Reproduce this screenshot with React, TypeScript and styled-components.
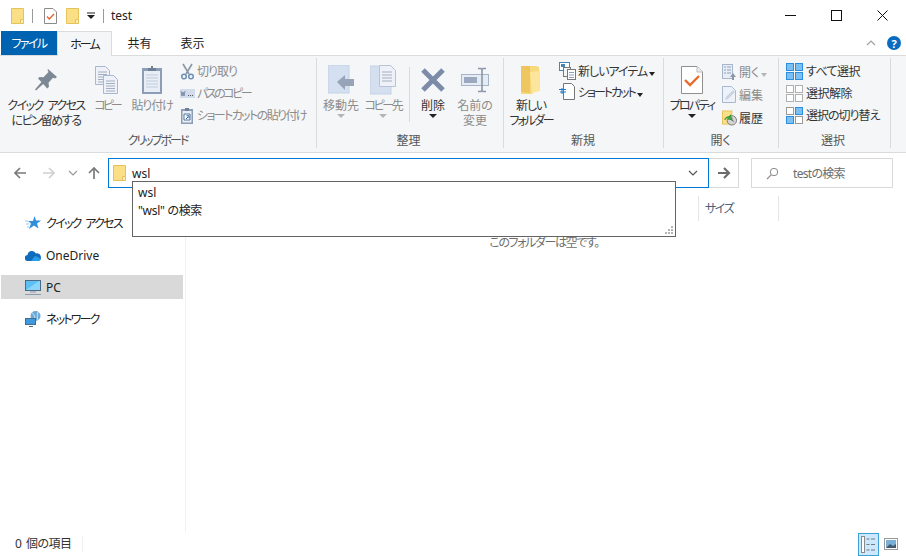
import React from "react";
import styled, { createGlobalStyle } from "styled-components";

const Global = createGlobalStyle`
  html, body { margin: 0; padding: 0; background: #fff; }
  * { box-sizing: border-box; }
`;
const Page = styled.div`
  position: relative; width: 906px; height: 556px; overflow: hidden; background: #fff;
  display: flex; flex-direction: column;
  font-family: "Noto Sans", "Noto Sans CJK JP", sans-serif; font-size: 12px; color: #222;
  font-feature-settings: "palt";
`;
const Tight = styled.span<{ $ls: number; $ws?: number }>`letter-spacing: ${p => p.$ls}px; word-spacing: ${p => p.$ws ?? 0}px;`;
const TitleBar = styled.div`height: 31px; display: flex; align-items: center; padding-left: 11px; flex: none;`;
const QatSep = styled.div<{ $ml: number; $mr: number }>`width: 1px; height: 14px; background: #9a9a9a; margin: 0 ${p => p.$mr}px 0 ${p => p.$ml}px;`;
const TitleText = styled.span`font-size: 12px; color: #222; line-height: 1;`;
const WinControls = styled.div`margin-left: auto; display: flex; align-items: center; height: 100%; padding-right: 1px;`;
const WinButton = styled.div`width: 46px; height: 100%; display: flex; align-items: center; justify-content: center;`;
const TabRow = styled.div`height: 24px; display: flex; align-items: stretch; padding-left: 1px; flex: none; position: relative;`;
const Tab = styled.div<{ $w: number; $kind?: "file" | "active" }>`
  width: ${p => p.$w}px; display: flex; align-items: center; justify-content: center; font-size: 12px;
  ${p => p.$kind === "file" ? "background:#0063b1;color:#fff;" : ""}
  ${p => p.$kind === "active" ? "background:#f5f6f7;border:1px solid #dadbdc;border-bottom:none;height:25px;position:relative;z-index:1;" : ""}
`;
const TabTools = styled.div`margin-left: auto; display: flex; align-items: center; gap: 11px; padding-right: 5px;`;
const HelpDot = styled.div`
  width: 14px; height: 14px; border-radius: 50%; background: #0a6cc0; color: #fff; font-size: 11px; font-weight: 700;
  display: flex; align-items: center; justify-content: center; line-height: 1;
`;
const Ribbon = styled.div`
  height: 98px; flex: none; background: #f5f6f7; border-top: 1px solid #dadbdc; border-bottom: 1px solid #dadbdc;
  display: flex; padding: 2px 0 0 2px;
`;
const Group = styled.div<{ $w: number; $pl?: number }>`
  width: ${p => p.$w}px; height: 90px; border-right: 1px solid #dadbdc; display: flex; flex-direction: column;
  padding-left: ${p => p.$pl ?? 0}px;
`;
const GroupBody = styled.div`flex: 1; display: flex; align-items: flex-start; min-height: 0;`;
const GroupLabel = styled.div<{ $pr?: number }>`
  height: 15px; line-height: 15px; text-align: center; color: #555; font-size: 12px; margin-left: -1px;
  padding-right: ${p => p.$pr ?? 0}px;
`;
const BigButton = styled.div<{ $w: number; $off?: boolean }>`
  width: ${p => p.$w}px; flex: none; display: flex; flex-direction: column; align-items: center;
  color: ${p => p.$off ? "#8c8c8c" : "#333"};
`;
const BigIcon = styled.div`height: 40px; display: flex; align-items: center; justify-content: center; padding-top: 3px;`;
const BigLabel = styled.div`
  line-height: 15px; text-align: center; white-space: nowrap; font-size: 12px; padding-top: 1px;
  font-family: "Liberation Sans", "Noto Sans CJK JP", sans-serif;
`;
const LabelLine = styled(Tight)`display: block;`;
const Caret = styled.div<{ $off?: boolean }>`
  width: 0; height: 0; border-left: 4px solid transparent; border-right: 4px solid transparent;
  border-top: 4px solid ${p => p.$off ? "#b5b5b5" : "#222"};
`;
const RibbonRule = styled.div`width: 1px; height: 55px; background: #dadbdc; margin: 9px 2px 0 5px; flex: none;`;
const SmallColumn = styled.div<{ $pl: number }>`padding: 2px 0 0 ${p => p.$pl}px; display: flex; flex-direction: column;`;
const SmallRow = styled.div<{ $h: number; $slot: number; $gap: number; $off?: boolean }>`
  height: ${p => p.$h}px; display: flex; align-items: center; white-space: nowrap; gap: ${p => p.$gap}px;
  color: ${p => p.$off ? "#8c8c8c" : "#333"}; font-size: 12px;
  & > svg { width: ${p => p.$slot}px; flex: none; }
`;
const InlineCaret = styled.span<{ $off?: boolean }>`
  display: inline-block; width: 0; height: 0; margin-left: 2px; border-left: 3.5px solid transparent; border-right: 3.5px solid transparent;
  border-top: 4px solid ${p => p.$off ? "#b5b5b5" : "#222"};
`;
const AddressRow = styled.div`height: 38px; flex: none; display: flex; padding: 5px 0 0 0; align-items: flex-start;`;
const NavCluster = styled.div`width: 108px; height: 30px; flex: none; display: flex; align-items: center; padding-left: 13px;`;
const AddressBox = styled.div`
  width: 601px; height: 30px; flex: none; border: 1px solid #0078d7; display: flex; align-items: center; padding: 0 10px 0 4px; gap: 6px; font-size: 12px;
  justify-content: flex-start;
`;
const AddressText = styled.span`flex: 1;`;
const GoButton = styled.div`
  width: 30px; height: 30px; flex: none; border: 1px solid #d9d9d9; border-left: none; display: flex; align-items: center; justify-content: center;
`;
const SearchBox = styled.div`
  width: 142px; height: 30px; flex: none; margin-left: 12px; border: 1px solid #d9d9d9; display: flex; align-items: center; padding-left: 14px; gap: 14px; color: #6d6d6d; font-size: 12px;
`;
const Main = styled.div`flex: 1; min-height: 0; display: flex;`;
const Sidebar = styled.div`width: 186px; flex: none; border-right: 1px solid #f0f0f0; padding: 20px 2px 0 1px; display: flex; flex-direction: column; gap: 8px;`;
const NavItem = styled.div<{ $sel?: boolean }>`
  height: 24px; display: flex; align-items: center; padding-left: 24px; gap: 5px; color: #222; font-size: 12px;
  background: ${p => p.$sel ? "#d9d9d9" : "transparent"};
`;
const Content = styled.div`flex: 1; position: relative;`;
const ColumnHeader = styled.div`height: 25px; margin-top: 5px; margin-left: 512px; display: flex;`;
const ColumnCell = styled.div`
  width: 81px; height: 25px; border-left: 1px solid #e5e5e5; border-right: 1px solid #e5e5e5;
  padding-left: 6px; display: flex; align-items: center; color: #4c607a; font-size: 12px; padding-bottom: 2px;
`;
const EmptyNote = styled.div`margin-top: 14px; text-align: center; color: #6d6d6d; font-size: 12px; padding-right: 4px; line-height: 16px;`;
const StatusBar = styled.div`height: 24px; flex: none; display: flex; align-items: center; padding-left: 15px; font-size: 12px; color: #333; position: relative;`;
const StatusText = styled.span`padding-bottom: 2px; letter-spacing: -0.5px; word-spacing: 2px;`;
const StatusSep = styled.div`width: 1px; height: 16px; background: #efefef; margin-left: 10px;`;
const ViewButtons = styled.div`margin-left: auto; display: flex; align-items: center; padding-right: 8px; gap: 5px; height: 100%;`;
const ViewActive = styled.div`width: 21px; height: 23px; background: #cce8ff; border: 1px solid #3fa0d8; display: flex; align-items: center; justify-content: center;`;
const Suggest = styled.div`
  position: absolute; left: 132px; top: 181px; width: 544px; height: 56px; background: #fff; border: 1px solid #646464; z-index: 5;
  padding: 2px 0 0 5px; font-size: 12px; color: #222; line-height: 18px;
`;
const SuggestGrip = styled.svg`position: absolute; right: 2px; bottom: 2px;`;

const Folder = ({ w = 13, h = 16 }: { w?: number; h?: number }) => (
  <svg width={w} height={h} viewBox="0 0 13 16">
    <path d="M.5.5h12v15H.5z" fill="#fbdf87" stroke="#e6c25b" />
    <path d="M9.5 11.5h3v4h-3z" fill="#fdeeb9" stroke="#e6c25b" />
  </svg>
);
const CheckDoc = () => (
  <svg width="13" height="16" viewBox="0 0 13 16">
    <path d="M.5.5h8.5l3.5 3.5v11.5H.5z" fill="#fff" stroke="#8a8a8a" />
    <path d="M3 8.5l2.3 2.5L10 6" fill="none" stroke="#e8622a" strokeWidth="1.4" />
  </svg>
);
const Pin = () => (
  <svg width="24" height="24" viewBox="0 0 24 24">
    <path d="M14 1l9 8-2 1.5-2-.7-4.500 5 .5 4-1.800 1.700-4-4.500L2 22.500 1 21.500l6.500-7.500-3.500-3.500L5.500 9l4 .2L14.500 4 13.500 2z" fill="#7c8895" />
  </svg>
);
const DocLines = ({ x, y }: { x: number; y: number }) => (
  <g transform={`translate(${x} ${y})`}>
    <path d="M.5.5h10l4 4v14H.5z" fill="#eef2f8" stroke="#a9b8d0" />
    <path d="M3 6h9M3 8.500h9M3 11h9M3 13.500h9M3 16h9" stroke="#a3aec0" />
  </g>
);
const CopyIcon = () => (
  <svg width="26" height="30" viewBox="0 0 26 30">
    <DocLines x={1} y={1} />
    <DocLines x={9} y={10} />
  </svg>
);
const PasteIcon = () => (
  <svg width="22" height="30" viewBox="0 0 22 30">
    <rect x="1" y="3" width="20" height="26" fill="#8d9db5" />
    <rect x="3" y="6" width="16" height="21" fill="#e9eef6" />
    <path d="M5 10h12M5 13h12M5 16h12M5 19h12M5 22h12" stroke="#c0cbdc" />
    <path d="M7 6V3h3V1h2v2h3v3z" fill="#6f7f96" />
  </svg>
);
const Scissors = () => (
  <svg width="15" height="17" viewBox="0 0 15 17">
    <path d="M3 1l6 10M12 1L6 11" stroke="#8a97a8" strokeWidth="1.6" fill="none" />
    <circle cx="4" cy="13.500" r="2.300" fill="none" stroke="#6f8fb5" strokeWidth="1.500" />
    <circle cx="11" cy="13.500" r="2.300" fill="none" stroke="#6f8fb5" strokeWidth="1.500" />
  </svg>
);
const PathIcon = () => (
  <svg width="15" height="9" viewBox="0 0 15 9">
    <rect width="15" height="9" fill="#d3dcea" />
    <path d="M1 2l1 5 1-4 1 4 1-5" stroke="#5c6f8c" strokeWidth=".7" fill="none" />
    <path d="M8 6.500h1M10 6.500h1M12 6.500h1" stroke="#4d5a6e" />
  </svg>
);
const ShortcutPaste = () => (
  <svg width="15" height="17" viewBox="0 0 15 17">
    <rect x="1" y="2" width="12" height="15" fill="#8d9db5" />
    <rect x="2.500" y="4" width="9" height="11.500" fill="#e9eef6" />
    <path d="M5 1h4v3H5z" fill="#6f7f96" />
    <path d="M4 7h6v6H4z" fill="#fff" stroke="#55779c" />
    <path d="M6 12l2-2M6.500 8.800H9v2.500" stroke="#2b65a8" fill="none" />
  </svg>
);
const MoveIcon = () => (
  <svg width="27" height="30" viewBox="0 0 27 30">
    <rect x="0" y="0" width="21" height="28" fill="#d4dfef" stroke="#c4d2e6" />
    <path d="M9 17l8-7v4h9v7h-9v4z" fill="#97a4b8" />
  </svg>
);
const CopyToIcon = () => (
  <svg width="27" height="30" viewBox="0 0 27 30">
    <rect x="0" y="1" width="21" height="28" fill="#d4dfef" stroke="#c4d2e6" />
    <path d="M9.500.5h11l5 5v16h-16z" fill="#eef2f8" stroke="#b8c4d6" />
    <path d="M12 7h10M12 10h10M12 13h10M12 16h10" stroke="#a3aec0" />
  </svg>
);
const DeleteIcon = () => (
  <svg width="26" height="26" viewBox="0 0 26 26">
    <path d="M3 3l20 20M23 3L3 23" stroke="#7c8ca8" strokeWidth="5" />
  </svg>
);
const RenameIcon = () => (
  <svg width="28" height="26" viewBox="0 0 28 26">
    <rect x=".5" y="7.500" width="27" height="11" fill="#e6ecf5" stroke="#a6b4c8" />
    <rect x="3" y="10" width="13" height="6" fill="#9aa9c0" />
    <path d="M17 1.500h3l1 1 1-1h3M21 2.500v21M17 24.500h3l1-1 1 1h3" fill="none" stroke="#8a97a8" strokeWidth="1.600" />
  </svg>
);
const TallFolder = () => (
  <svg width="20" height="28" viewBox="0 0 20 28">
    <path d="M0 0h15l3 1v19L11 28H0z" fill="#f7d97b" />
    <path d="M9 6l10-1v20l-8 2z" fill="#fde69c" />
    <path d="M0 0h9v6H0z" fill="#eec458" />
    <path d="M0 0v26l9 1V6z" fill="#efc760" />
  </svg>
);
const NewItem = () => (
  <svg width="17" height="18" viewBox="0 0 17 18">
    <rect x=".5" y=".5" width="10" height="8" fill="#fff" stroke="#4a84b5" />
    <rect x="2" y="2" width="4" height="3" fill="#4a84b5" />
    <rect x="4.500" y="5.500" width="7" height="9" fill="#f4f5f7" stroke="#777" />
    <rect x="8.500" y="7.500" width="8" height="10" fill="#fff" stroke="#777" />
    <path d="M10 10.500h5M10 13h5M10 15.500h5" stroke="#8aa2c0" />
  </svg>
);
const ShortcutIcon = () => (
  <svg width="17" height="17" viewBox="0 0 17 17">
    <path d="M4.500.5h8l3 3v13h-11z" fill="#fff" stroke="#777" />
    <path d="M0 6.500h7M1 9h6M3 5v6" stroke="#1f78c8" strokeWidth="1" fill="none" />
  </svg>
);
const PropsIcon = () => (
  <svg width="22" height="28" viewBox="0 0 22 28">
    <path d="M.5.5h15.500l5.500 5.500v21.500H.5z" fill="#fff" stroke="#8f8f8f" />
    <path d="M16 .5v5.500h5.500" fill="#eee" stroke="#bbb" />
    <path d="M4 14l5 5 9-9" fill="none" stroke="#ea6a2a" strokeWidth="2.400" />
  </svg>
);
const OpenIcon = () => (
  <svg width="15" height="16" viewBox="0 0 15 16">
    <rect x=".5" y=".5" width="10" height="14" fill="#e9eef6" stroke="#a8b6ca" />
    <path d="M2 3h2M2 6h2M2 9h2M5 3h4M5 6h4M5 9h4" stroke="#8ea0b8" />
    <path d="M8 13l3-4 3 4h-2v3h-2v-3z" fill="#8a97a8" />
  </svg>
);
const EditIcon = () => (
  <svg width="15" height="17" viewBox="0 0 15 17">
    <path d="M.5.5h9l4 4v12H.5z" fill="#eef2f8" stroke="#a9b8d0" />
    <path d="M3 14l1-3 7-7 2 2-7 7z" fill="#c9d3e2" />
  </svg>
);
const HistoryIcon = () => (
  <svg width="16" height="16" viewBox="0 0 16 16">
    <rect x=".5" y=".5" width="10" height="14" fill="#fbdf87" stroke="#e6c25b" />
    <circle cx="10.500" cy="10.500" r="5" fill="#d5d5d5" stroke="#777" />
    <path d="M10.500 7.500v3l2 1" stroke="#555" fill="none" />
    <path d="M3 10a4 4 0 0 1 5-3l-1 2 3 .5-1-4-1 1" fill="none" stroke="#2f9a35" strokeWidth="1.400" />
  </svg>
);
const SelGrid = ({ mode }: { mode: "all" | "none" | "invert" }) => {
  const cells = [[0, 0], [9, 0], [0, 9], [9, 9]];
  const on = mode === "all" ? [0, 1, 2, 3] : mode === "invert" ? [1, 2] : [];
  return (
    <svg width="17" height="17" viewBox="0 0 17 17">
      {cells.map(([x, y], i) => (
        <rect key={i} x={x + .5} y={y + .5} width="7" height="7"
          fill={on.includes(i) ? "#7cc0f2" : "#fff"}
          stroke={mode === "none" ? "#b0b0b0" : on.includes(i) ? "#2a8fe0" : "#9a9a9a"} />
      ))}
    </svg>
  );
};
const Arrow = ({ color, dir = 0, sw = 1.7 }: { color: string; dir?: number; sw?: number }) => (
  <svg width="14" height="14" viewBox="0 0 14 14" style={{ transform: `rotate(${dir}deg)` }}>
    <path d="M13 7H2M7 2L2 7l5 5" fill="none" stroke={color} strokeWidth={sw} />
  </svg>
);
const Chev = ({ color, up }: { color: string; up?: boolean }) => (
  <svg width="10" height="6" viewBox="0 0 10 6" style={up ? { transform: "rotate(180deg)" } : undefined}>
    <path d="M1 1l4 4 4-4" fill="none" stroke={color} strokeWidth="1.200" />
  </svg>
);
const NavGap = styled.span<{ $w: number }>`display: inline-block; width: ${p => p.$w}px; flex: none;`;
const Star = () => (
  <svg width="16" height="16" viewBox="0 0 16 16">
    <path d="M9.500 1l1.500 4.500h5l-4 3 1.500 5-4.500-3-5 3.500 2-5.500L3 6h5z" fill="#2f8fdc" />
    <path d="M0 6h3M1 9h3M2 12h2" stroke="#9cc8ec" />
  </svg>
);
const Cloud = () => (
  <svg width="16" height="11" viewBox="0 0 16 11">
    <path d="M3 11a3 3 0 0 1-.5-6A4.500 4.500 0 0 1 11 3.500 3.500 3.500 0 0 1 13 11z" fill="#0f6cbd" />
    <path d="M6 11l4-5 3 1 3 2.500-2 1.500z" fill="#2a9be6" />
  </svg>
);
const Monitor = () => (
  <svg width="16" height="15" viewBox="0 0 16 15">
    <rect x=".5" y=".5" width="15" height="10" fill="#5cc0f5" stroke="#4a6a86" />
    <path d="M1 10L14 1h1v9z" fill="#8ad6fa" />
    <path d="M5 12h6M0 14.500h16" stroke="#8a9bb0" />
  </svg>
);
const Network = () => (
  <svg width="16" height="16" viewBox="0 0 16 16">
    <circle cx="10.500" cy="5" r="5" fill="#6aa9d8" />
    <path d="M7 2c2 1 3 3 3 8M13 1c-1 3-1 6 0 8" stroke="#d7e9f6" fill="none" />
    <rect x=".5" y="7.500" width="10" height="6" fill="#3d9ade" stroke="#4a6a86" />
    <path d="M4 15.500h4" stroke="#4a6a86" />
  </svg>
);
const SearchGlyph = () => (
  <svg width="13" height="13" viewBox="0 0 13 13">
    <circle cx="8" cy="5" r="3.700" fill="none" stroke="#888" />
    <path d="M5.200 7.800L1 12" stroke="#9a8a80" strokeWidth="1.200" />
  </svg>
);
const DetailsGlyph = () => (
  <svg width="15" height="17" viewBox="0 0 15 17">
    <rect x=".5" y=".5" width="3" height="16" fill="#fff" stroke="#8a8a8a" />
    <path d="M5.500 3h3M10 3h4M5.500 8.500h3M10 8.500h4M5.500 14h3M10 14h4" stroke="#777" />
  </svg>
);
const ThumbGlyph = () => (
  <svg width="14" height="12" viewBox="0 0 14 12">
    <rect x=".5" y=".5" width="13" height="11" fill="#fff" stroke="#9a9a9a" />
    <rect x="2" y="2" width="10" height="8" fill="#7ab0d8" />
    <path d="M2 10l4-4 3 2 3-2v4z" fill="#44586c" />
  </svg>
);

export default function App() {
  const clip = { $h: 22, $slot: 15, $gap: 2, $off: true };
  const open = { $h: 23, $slot: 15, $gap: 2 };
  const sel = { $h: 22, $slot: 17, $gap: 3 };
  const fresh = { $h: 21, $slot: 17, $gap: 2 };
  return (
    <Page>
      <Global />
      <TitleBar>
        <Folder />
        <QatSep $ml={8} $mr={11} />
        <CheckDoc />
        <NavGap $w={9} />
        <Folder />
        <NavGap $w={8} />
        <svg width="8" height="8" viewBox="0 0 8 8"><path d="M0 1h8" stroke="#222" /><path d="M0 3h8L4 7z" fill="#222" /></svg>
        <QatSep $ml={8} $mr={7} />
        <TitleText>test</TitleText>
        <WinControls>
          <WinButton><svg width="11" height="11" viewBox="0 0 11 11"><path d="M0 5.500h11" stroke="#111" /></svg></WinButton>
          <WinButton><svg width="11" height="11" viewBox="0 0 11 11"><rect x=".5" y=".5" width="10" height="10" fill="none" stroke="#111" /></svg></WinButton>
          <WinButton><svg width="11" height="11" viewBox="0 0 11 11"><path d="M.5.500l10 10M10.500.500l-10 10" stroke="#111" /></svg></WinButton>
        </WinControls>
      </TitleBar>
      <TabRow>
        <Tab $w={56} $kind="file"><Tight $ls={-1.6}>ファイル</Tight></Tab>
        <Tab $w={55} $kind="active"><Tight $ls={-2}>ホーム</Tight></Tab>
        <Tab $w={55}>共有</Tab>
        <Tab $w={51}>表示</Tab>
        <TabTools>
          <Chev color="#a0a0a0" up />
          <HelpDot>?</HelpDot>
        </TabTools>
      </TabRow>
      <Ribbon>
        <Group $w={315}>
          <GroupBody>
            <BigButton $w={88}><BigIcon><Pin /></BigIcon><BigLabel><LabelLine $ls={-1.6} $ws={3}>クイック アクセス</LabelLine><LabelLine $ls={-1.4}>にピン留めする</LabelLine></BigLabel></BigButton>
            <BigButton $w={34} $off><BigIcon><CopyIcon /></BigIcon><BigLabel><Tight $ls={-3}>コピー</Tight></BigLabel></BigButton>
            <BigButton $w={56} $off><BigIcon><PasteIcon /></BigIcon><BigLabel><Tight $ls={-1.2}>貼り付け</Tight></BigLabel></BigButton>
            <SmallColumn $pl={0}>
              <SmallRow {...clip}><Scissors /><Tight $ls={-1}>切り取り</Tight></SmallRow>
              <SmallRow {...clip}><PathIcon /><Tight $ls={-2.5}>パスのコピー</Tight></SmallRow>
              <SmallRow {...clip}><ShortcutPaste /><Tight $ls={-1.6}>ショートカットの貼り付け</Tight></SmallRow>
            </SmallColumn>
          </GroupBody>
          <GroupLabel $pr={2}><Tight $ls={-2}>クリップボード</Tight></GroupLabel>
        </Group>
        <Group $w={187} $pl={3}>
          <GroupBody>
            <BigButton $w={42} $off><BigIcon><MoveIcon /></BigIcon><BigLabel>移動先</BigLabel><Caret $off /></BigButton>
            <BigButton $w={42} $off><BigIcon><CopyToIcon /></BigIcon><BigLabel><Tight $ls={-2.4}>コピー先</Tight></BigLabel><Caret $off /></BigButton>
            <RibbonRule />
            <BigButton $w={42}><BigIcon><DeleteIcon /></BigIcon><BigLabel>削除</BigLabel><Caret /></BigButton>
            <BigButton $w={42} $off><BigIcon><RenameIcon /></BigIcon><BigLabel>名前の<br />変更</BigLabel></BigButton>
          </GroupBody>
          <GroupLabel $pr={5}>整理</GroupLabel>
        </Group>
        <Group $w={160}>
          <GroupBody>
            <BigButton $w={54}><BigIcon><TallFolder /></BigIcon><BigLabel><LabelLine $ls={-1.2}>新しい</LabelLine><LabelLine $ls={-2}>フォルダー</LabelLine></BigLabel></BigButton>
            <SmallColumn $pl={1}>
              <SmallRow {...fresh}><NewItem /><span><Tight $ls={-1}>新しいアイテム</Tight><InlineCaret /></span></SmallRow>
              <SmallRow {...fresh}><ShortcutIcon /><span><Tight $ls={-2}>ショートカット</Tight><InlineCaret /></span></SmallRow>
            </SmallColumn>
          </GroupBody>
          <GroupLabel>新規</GroupLabel>
        </Group>
        <Group $w={115}>
          <GroupBody>
            <BigButton $w={56}><BigIcon><PropsIcon /></BigIcon><BigLabel><Tight $ls={-1.8}>プロパティ</Tight></BigLabel><Caret /></BigButton>
            <SmallColumn $pl={2}>
              <SmallRow {...open} $off><OpenIcon /><span>開く<InlineCaret $off /></span></SmallRow>
              <SmallRow {...open} $off><EditIcon />編集</SmallRow>
              <SmallRow {...open}><HistoryIcon />履歴</SmallRow>
            </SmallColumn>
          </GroupBody>
          <GroupLabel>開く</GroupLabel>
        </Group>
        <Group $w={112}>
          <GroupBody>
            <SmallColumn $pl={7}>
              <SmallRow {...sel}><SelGrid mode="all" /><Tight $ls={-0.6}>すべて選択</Tight></SmallRow>
              <SmallRow {...sel}><SelGrid mode="none" /><Tight $ls={-0.5}>選択解除</Tight></SmallRow>
              <SmallRow {...sel}><SelGrid mode="invert" /><Tight $ls={-1}>選択の切り替え</Tight></SmallRow>
            </SmallColumn>
          </GroupBody>
          <GroupLabel $pr={2}>選択</GroupLabel>
        </Group>
      </Ribbon>
      <AddressRow>
        <NavCluster>
          <Arrow color="#7a7a7a" />
          <NavGap $w={15} />
          <Arrow color="#d0d0d0" dir={180} />
          <NavGap $w={12} />
          <Chev color="#9a9a9a" />
          <NavGap $w={9} />
          <Arrow color="#7a7a7a" dir={90} />
        </NavCluster>
        <AddressBox>
          <Folder />
          <AddressText>wsl</AddressText>
          <Chev color="#555" />
        </AddressBox>
        <GoButton><Arrow color="#6d6d6d" dir={180} sw={2.2} /></GoButton>
        <SearchBox><SearchGlyph /><Tight $ls={-0.7}>testの検索</Tight></SearchBox>
      </AddressRow>
      <Main>
        <Sidebar>
          <NavItem><Star /><Tight $ls={-1.7} $ws={3}>クイック アクセス</Tight></NavItem>
          <NavItem><Cloud />OneDrive</NavItem>
          <NavItem $sel><Monitor />PC</NavItem>
          <NavItem><Network /><Tight $ls={-1.8}>ネットワーク</Tight></NavItem>
        </Sidebar>
        <Content>
          <ColumnHeader><ColumnCell><Tight $ls={-1.5}>サイズ</Tight></ColumnCell></ColumnHeader>
          <EmptyNote><Tight $ls={-1.4}>このフォルダーは空です。</Tight></EmptyNote>
        </Content>
      </Main>
      <StatusBar>
        <StatusText>0 個の項目</StatusText>
        <StatusSep />
        <ViewButtons>
          <ViewActive><DetailsGlyph /></ViewActive>
          <ThumbGlyph />
        </ViewButtons>
      </StatusBar>
      <Suggest>
        <div>wsl</div>
        <div><Tight $ls={-0.3}>"wsl" の検索</Tight></div>
        <SuggestGrip width="9" height="9" viewBox="0 0 9 9">
          <path d="M7 1h2v2H7zM4 4h2v2H4zM7 4h2v2H7zM1 7h2v2H1zM4 7h2v2H4zM7 7h2v2H7z" fill="#b5b5b5" />
        </SuggestGrip>
      </Suggest>
    </Page>
  );
}
